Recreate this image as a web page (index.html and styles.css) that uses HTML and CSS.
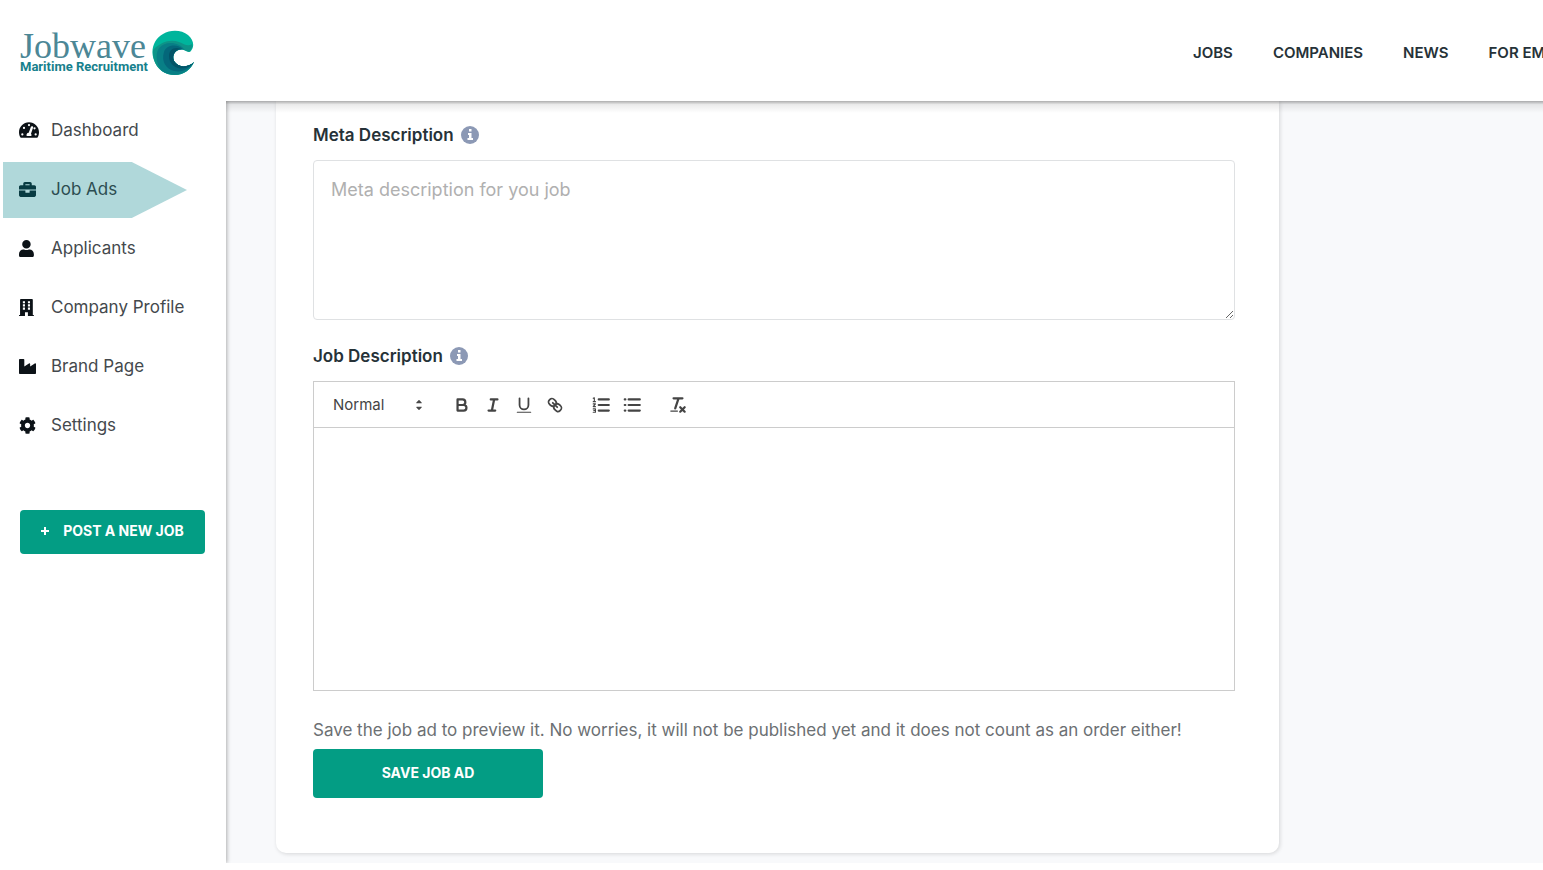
FILE: index.html
```
<!DOCTYPE html>
<html lang="en">
<head>
  <meta charset="UTF-8">
  <meta name="viewport" content="width=device-width, initial-scale=1.0">
  <title>Jobwave - Job Ads</title>
  <link rel="stylesheet" href="styles.css">
</head>
<body>
  <header class="header">
    <a class="logo" href="#">
      <span class="logo-text">
        <span class="logo-name">Jobwave</span>
        <span class="logo-tagline">Maritime Recruitment</span>
      </span>
      <svg class="logo-wave" viewBox="0 0 42 45" aria-hidden="true">
        <path fill="#00b59c" d="M38 22C43 17 42 10 36 5C30 0 19-1 11 4C2 9-2 20 2 30C5 39 13 45 23 45C32 45 39 39 42 32C36 38 26 38 22 31C19 24 25 18 32 20C34 21 36 22 38 22Z"/>
        <path fill="#0d9488" d="M37 22C40 19 41 16 40 14C36 17 32 14 27 12C18 9 9 12 1 20C0 34 9 45 23 45C32 45 39 39 42 32C36 38 26 38 22 31C19 24 25 18 32 20Z"/>
        <path fill="#087f86" d="M33 20C27 12 14 10 7 18C3 24 4 35 10 41C23 49 37 43 42 32C36 38 26 38 22 31C19 24 25 18 33 20Z"/>
        <path fill="#04677a" d="M31 19C24 13 14 15 12 22C9 31 14 39 22 41C31 43 38 38 42 32C36 38 26 38 22 31C19 24 25 18 31 19Z"/>
        <path fill="#035468" d="M29 19C22 16 17 20 17 26C17 35 25 40 33 38C37 37 40 35 42 32C36 38 26 38 22 31C19 25 24 19 29 19Z"/>
      </svg>
    </a>
    <nav class="main-nav">
      <a href="#">JOBS</a>
      <a href="#">COMPANIES</a>
      <a href="#">NEWS</a>
      <a href="#">FOR EMPLOYERS</a>
    </nav>
  </header>

  <div class="page">
    <!-- Sidebar -->
    <aside class="sidebar">
      <nav class="side-nav">
        <a class="side-link" href="#">
          <svg class="side-icon icon-wide" viewBox="0 0 576 512">
            <path fill-rule="evenodd" d="M288 32C129 32 0 161 0 320c0 53 14 102 39 145 6 10 16 15 27 15h444c11 0 21-5 27-15 25-43 39-92 39-145C576 161 447 32 288 32zM288 82a32 32 0 1 1 0 64 32 32 0 0 1 0-64zM96 352a32 32 0 1 1 0 64 32 32 0 0 1 0-64zM144 165a32 32 0 1 1 0 64 32 32 0 0 1 0-64zM480 352a32 32 0 1 1 0 64 32 32 0 0 1 0-64zM391 151c13 4 19 18 15 30l-61 184c17 20 19 48 8 67H223c-20-36 2-94 57-96l61-170c5-13 37-19 50-15zM447 175a32 32 0 1 1 0 64 32 32 0 0 1 0-64z"/>
          </svg>
          Dashboard
        </a>
        <a class="side-link active" href="#">
          <svg class="side-icon" viewBox="0 0 512 512">
            <path d="M320 336c0 8.84-7.16 16-16 16h-96c-8.84 0-16-7.16-16-16v-48H0v144c0 25.6 22.4 48 48 48h416c25.6 0 48-22.4 48-48V288H320v48zm144-208h-80V80c0-25.6-22.4-48-48-48H176c-25.6 0-48 22.4-48 48v48H48c-25.6 0-48 22.4-48 48v80h512v-80c0-25.6-22.4-48-48-48zm-144 0H192V96h128v32z"/>
          </svg>
          Job Ads
        </a>
        <a class="side-link" href="#">
          <svg class="side-icon" viewBox="0 0 512 512">
            <path d="M224 256c70.7 0 128-57.3 128-128S294.7 0 224 0 96 57.3 96 128s57.3 128 128 128zm89.600 32h-16.700c-22.200 10.200-46.900 16-72.900 16s-50.600-5.800-72.900-16h-16.700C60.200 288 0 348.200 0 422.400V464c0 26.500 21.500 48 48 48h352c26.500 0 48-21.500 48-48v-41.600c0-74.200-60.200-134.400-134.400-134.400z"/>
          </svg>
          Applicants
        </a>
        <a class="side-link" href="#">
          <svg class="side-icon" viewBox="0 0 512 512">
            <path fill-rule="evenodd" d="M436 480h-20V24c0-13-11-24-24-24H56C43 0 32 11 32 24v456H12c-7 0-12 5-12 12v20h180V396h88v116h180v-20c0-7-5-12-12-12zM116 64h64v64h-64zM116 160h64v64h-64zM116 256h64v64h-64zM268 64h64v64h-64zM268 160h64v64h-64zM268 256h64v64h-64z"/>
          </svg>
          Company Profile
        </a>
        <a class="side-link" href="#">
          <svg class="side-icon" viewBox="0 0 512 512">
            <path d="M475.115 163.781L336 252.309v-68.280c0-18.916-20.931-30.399-36.885-20.248L160 252.309V56c0-13.255-10.745-24-24-24H24C10.745 32 0 42.745 0 56v400c0 13.255 10.745 24 24 24h464c13.255 0 24-10.745 24-24V184.029c0-18.917-20.931-30.399-36.885-20.248z"/>
          </svg>
          Brand Page
        </a>
        <a class="side-link" href="#">
          <svg class="side-icon" viewBox="0 0 512 512">
            <path d="M487.4 315.7l-42.6-24.6c4.3-23.2 4.3-47 0-70.2l42.6-24.6c4.9-2.8 7.1-8.6 5.5-14-11.1-35.6-30-67.8-54.7-94.6-3.8-4.1-10-5.1-14.8-2.3L380.8 110c-17.9-15.4-38.5-27.3-60.8-35.1V25.8c0-5.6-3.9-10.5-9.4-11.7-36.7-8.2-74.3-7.8-109.2 0-5.5 1.2-9.4 6.1-9.4 11.7V75c-22.2 7.9-42.8 19.8-60.8 35.1L88.700 85.500c-4.900-2.800-11-1.900-14.800 2.300-24.700 26.700-43.600 58.900-54.700 94.600-1.700 5.400.6 11.200 5.500 14L67.300 221c-4.300 23.200-4.300 47 0 70.200l-42.600 24.600c-4.900 2.800-7.100 8.600-5.500 14 11.100 35.600 30 67.800 54.700 94.600 3.800 4.100 10 5.100 14.800 2.300l42.600-24.600c17.900 15.400 38.500 27.300 60.800 35.100v49.200c0 5.600 3.900 10.500 9.400 11.700 36.700 8.200 74.300 7.800 109.200 0 5.500-1.200 9.400-6.100 9.400-11.700v-49.200c22.200-7.900 42.800-19.800 60.800-35.100l42.600 24.600c4.900 2.800 11 1.900 14.800-2.300 24.700-26.700 43.600-58.900 54.700-94.600 1.500-5.500-.7-11.300-5.600-14.100zM256 336c-44.100 0-80-35.900-80-80s35.900-80 80-80 80 35.900 80 80-35.900 80-80 80z"/>
          </svg>
          Settings
        </a>
      </nav>
      <button class="btn post-btn" type="button">
        <svg class="plus" viewBox="0 0 8 8" aria-hidden="true"><path d="M4 0v8M0 4h8"/></svg>
        POST A NEW JOB
      </button>
    </aside>

    <!-- Job form -->
    <main class="content">
      <form class="card">
        <div class="label-row">
          <label for="meta">Meta Description</label>
          <svg class="info" viewBox="0 0 18 18" aria-hidden="true"><circle cx="9" cy="9" r="9"/><path d="M8 3h2.500v2.500H8zM7 7h3.500v5H12v2H6.500v-2H8V9H7z"/></svg>
        </div>
        <textarea class="meta-input" id="meta" placeholder="Meta description for you job"></textarea>

        <div class="label-row">
          <label for="job-description">Job Description</label>
          <svg class="info" viewBox="0 0 18 18" aria-hidden="true"><circle cx="9" cy="9" r="9"/><path d="M8 3h2.500v2.500H8zM7 7h3.500v5H12v2H6.500v-2H8V9H7z"/></svg>
        </div>
        <div class="editor">
          <div class="toolbar">
            <div class="format">
              <select class="format-select" aria-label="Text format">
                <option>Normal</option>
                <option>Heading 1</option>
                <option>Heading 2</option>
              </select>
              <svg class="format-arrows" viewBox="0 0 18 18"><path class="solid" d="M7 11l2 2 2-2zM7 7l2-2 2 2z"/></svg>
            </div>
            <div class="tools">
              <button class="tool" type="button" aria-label="Bold"><svg viewBox="0 0 18 18"><path d="M5 4h4.500a2.500 2.500 0 0 1 0 5H5zM5 9h5.500a2.500 2.500 0 0 1 0 5H5z"/></svg></button>
              <button class="tool" type="button" aria-label="Italic"><svg viewBox="0 0 18 18"><path d="M7 4h6M5 14h6M8 14l2-10"/></svg></button>
              <button class="tool" type="button" aria-label="Underline"><svg viewBox="0 0 18 18"><path class="medium" d="M5 3v6a4 4 0 0 0 8 0V3"/><path class="thin" d="M3 15.500h12"/></svg></button>
              <button class="tool" type="button" aria-label="Link"><svg viewBox="0 0 18 18"><path class="medium" d="M7 7l4 4M8.900 4.577a3.476 3.476 0 0 1 .36 4.679A3.476 3.476 0 0 1 4.577 8.900C3.185 7.500 2.035 6.400 4.217 4.217S7.500 3.185 8.900 4.577zM13.423 9.100a3.476 3.476 0 0 0-4.679-.36 3.476 3.476 0 0 0 .36 4.679c1.392 1.392 2.500 2.542 4.679.36S14.815 10.500 13.423 9.100z"/></svg></button>
            </div>
            <div class="tools">
              <button class="tool" type="button" aria-label="Numbered list"><svg viewBox="0 0 18 18"><path d="M7 4h9M7 9h9M7 14h9"/><path class="thin" d="M2 3l1-.5V6M2 6h2M2 8h2L2 10.500h2M2 12.500h2v3H2M2.500 14H4"/></svg></button>
              <button class="tool" type="button" aria-label="Bullet list"><svg viewBox="0 0 18 18"><path d="M6 4h10M6 9h10M6 14h10M2.500 4h.5M2.500 9h.5M2.500 14h.5"/></svg></button>
            </div>
            <div class="tools">
              <button class="tool" type="button" aria-label="Clear formatting"><svg viewBox="0 0 18 18"><path d="M5 3h8M6.500 12l3-9M11 11l4 4M15 11l-4 4"/><path class="thin" d="M2.500 14.500h6"/></svg></button>
            </div>
          </div>
          <textarea class="editor-area" id="job-description"></textarea>
        </div>

        <p class="hint">Save the job ad to preview it. No worries, it will not be published yet and it does not count as an order either!</p>
        <button class="btn save-btn" type="button">SAVE JOB AD</button>
      </form>
    </main>
  </div>
</body>
</html>
```
FILE: styles.css
```
* {
  margin: 0;
  padding: 0;
  box-sizing: border-box;
}

body {
  font-family: Inter, "Liberation Sans", sans-serif;
  background: #fff;
  color: #263238;
  overflow-x: hidden;
}

a {
  color: inherit;
  text-decoration: none;
}

/* Header */
.header {
  position: relative;
  z-index: 10;
  display: flex;
  justify-content: space-between;
  align-items: center;
  height: 101px;
  padding: 4px 0 0 20px;
  background: #fff;
}

/* shadow starts right of the sidebar */
.header::after {
  content: "";
  position: absolute;
  top: 100%;
  left: 226px;
  right: 0;
  height: 12px;
  background: linear-gradient(rgba(0, 0, 0, 0.32), rgba(0, 0, 0, 0.08) 30%, transparent);
  pointer-events: none;
}

.logo {
  display: flex;
  align-items: center;
  gap: 4px;
}

.logo-text {
  display: flex;
  flex-direction: column;
}

.logo-name {
  font-family: "Liberation Serif", serif;
  font-size: 36px;
  line-height: 28px;
  color: #4c8796;
}

.logo-tagline {
  font-family: Roboto, sans-serif;
  font-size: 13px;
  font-weight: 700;
  line-height: 14px;
  color: #16808c;
}

.logo-wave {
  width: 42px;
  height: 45px;
}

.main-nav {
  display: flex;
  flex: 0 0 350px;
  gap: 40px;
  overflow: hidden;
  font-size: 15px;
  font-weight: 600;
  white-space: nowrap;
}

.page {
  display: flex;
}

/* Sidebar */
.sidebar {
  position: relative;
  z-index: 1;
  flex: 0 0 226px;
  background: #fff;
  box-shadow: 1px 0 4px rgba(0, 0, 0, 0.3);
}

.side-nav {
  display: flex;
  flex-direction: column;
  gap: 3px;
  padding: 2px 39px 0 3px;
}

.side-link {
  display: flex;
  align-items: center;
  height: 56px;
  padding: 0 0 2px 16px;
  font-size: 17px;
  color: #44494d;
}

.side-link.active {
  background: #b0d8da;
  color: #2c4d51;
  clip-path: polygon(0 0, 70% 0, 100% 50%, 70% 100%, 0 100%);
}

.side-icon {
  width: 17px;
  height: 17px;
  margin-right: 15px;
  fill: #0c1217;
}

.side-icon.icon-wide {
  width: 20px;
  height: 18px;
  margin-right: 12px;
}

.active .side-icon {
  fill: #083b42;
}

.btn {
  border: none;
  border-radius: 4px;
  background: #039d84;
  color: #fff;
  font-family: inherit;
  font-weight: 700;
  font-size: 14px;
  cursor: pointer;
}

.post-btn {
  display: flex;
  align-items: center;
  justify-content: center;
  gap: 14px;
  width: 185px;
  height: 44px;
  margin: 56px 0 0 20px;
  padding-bottom: 3px;
}

.plus {
  width: 8px;
  height: 8px;
  stroke: #fff;
  stroke-width: 2;
}

/* Content */
.content {
  flex: 1;
  min-width: 0;
  padding: 0 50px 10px;
  background: #f8f9fb;
}

.card {
  width: 100%;
  max-width: 1003px;
  padding: 20px 44px 55px 37px;
  background: #fff;
  border-radius: 0 0 10px 10px;
  box-shadow: 1px 1px 4px rgba(0, 0, 0, 0.14);
}

.label-row {
  display: flex;
  align-items: center;
  gap: 7px;
  height: 28px;
  margin-bottom: 11px;
  font-size: 17px;
  font-weight: 600;
}

.info {
  width: 18px;
  height: 18px;
  fill: #8c99b5;
}

.info path {
  fill: #fff;
}

.meta-input {
  display: block;
  width: 100%;
  height: 160px;
  margin-bottom: 22px;
  padding: 17px;
  border: 1px solid #dfe1e3;
  border-radius: 4px;
  font-family: inherit;
  font-size: 18px;
  line-height: 24px;
  resize: vertical;
}

.meta-input::placeholder {
  color: #b0b0b0;
}

.editor {
  border: 1px solid #ccc;
}

.toolbar {
  display: flex;
  align-items: center;
  gap: 15px;
  height: 46px;
  padding-left: 19px;
  border-bottom: 1px solid #ccc;
}

.format {
  position: relative;
  width: 98px;
}

.format-select {
  display: block;
  width: 100%;
  height: 20px;
  border: none;
  background: none;
  appearance: none;
  font-family: inherit;
  font-size: 15px;
  color: #444;
}

.format-arrows {
  position: absolute;
  top: 0;
  right: 2px;
  width: 20px;
  height: 20px;
  pointer-events: none;
}

.tools {
  display: flex;
}

.tool {
  width: 31px;
  height: 28px;
  border: none;
  background: none;
  cursor: pointer;
}

.tool svg {
  display: block;
  width: 20px;
  height: 20px;
  margin: 0 auto;
}

.toolbar path {
  fill: none;
  stroke: #444;
  stroke-width: 2;
  stroke-linecap: round;
  stroke-linejoin: round;
}

.toolbar .medium {
  stroke-width: 1.6;
}

.toolbar .thin {
  stroke-width: 1;
}

.toolbar .solid {
  fill: #444;
  stroke-width: 1;
}

.editor-area {
  display: block;
  width: 100%;
  height: 262px;
  padding: 12px 15px;
  border: none;
  font-family: inherit;
  font-size: 15px;
  resize: none;
}

.hint {
  margin-top: 25px;
  font-size: 17px;
  line-height: 28px;
  color: #6c7073;
}

.save-btn {
  display: block;
  width: 230px;
  height: 49px;
  margin-top: 5px;
  padding-bottom: 3px;
}
```
